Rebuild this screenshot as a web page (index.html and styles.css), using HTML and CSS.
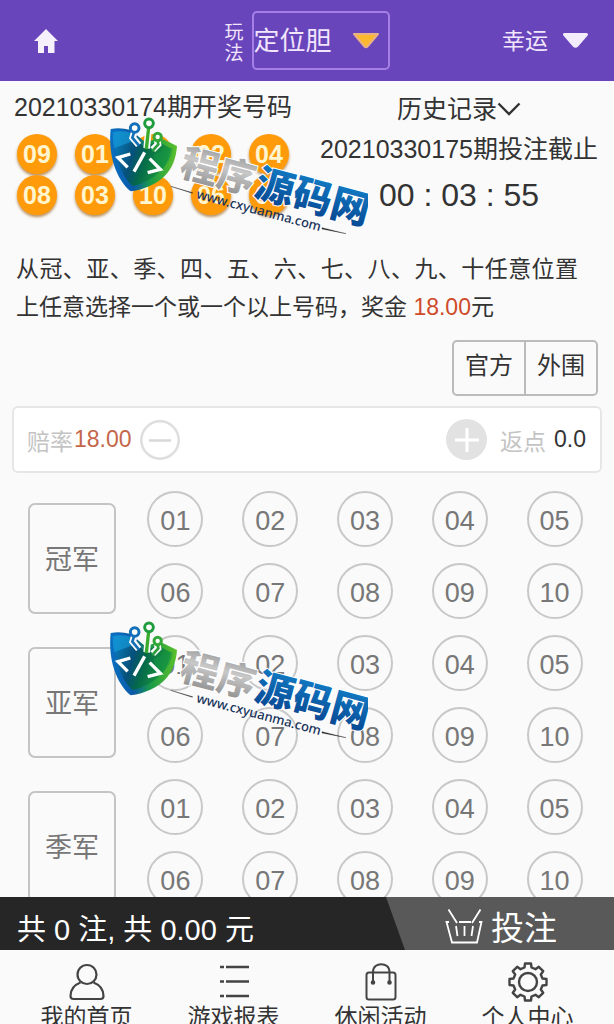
FILE: index.html
```html
<!DOCTYPE html>
<html lang="zh-CN">
<head>
<meta charset="utf-8">
<meta name="viewport" content="width=device-width, initial-scale=1">
<title>定位胆</title>
<link rel="stylesheet" href="styles.css">
</head>
<body>
<div class="app">
  <header class="topbar">
    <a class="home" href="#" aria-label="首页">
      <svg width="24" height="24" viewBox="0 0 24 24"><path fill="#f6effc" d="M12 0 24 12H20.500V24H14V17H10V24H4V12H0Z"/></svg>
    </a>
    <div class="play">
      <label class="play-label" for="play">玩法</label>
      <div class="picker picker-play">
        <select id="play"><option>定位胆</option></select>
        <svg class="caret" width="28" height="17" viewBox="0 0 28 17"><path d="M2 2H26L15.500 14.500Q14 16 12.500 14.500Z" fill="#fdb92e" stroke="#e9b184" stroke-width="2" stroke-linejoin="round"/></svg>
      </div>
    </div>
    <div class="picker picker-game">
      <select aria-label="彩种"><option>幸运</option></select>
      <svg class="caret" width="27" height="17" viewBox="0 0 27 17"><path d="M2.500 2.500H24.500L15 13.500Q13.500 15 12 13.500Z" fill="#f3ecfd" stroke="#f3ecfd" stroke-width="3" stroke-linejoin="round"/></svg>
    </div>
  </header>

  <main class="content">
    <section class="draw">
      <div class="result">
        <h2 class="issue">20210330174期开奖号码</h2>
        <div class="balls">
          <span>09</span><span>01</span><span>07</span><span>02</span><span>04</span>
          <span>08</span><span>03</span><span>10</span><span>06</span><span>05</span>
        </div>
      </div>
      <div class="deadline">
        <button class="history" type="button">历史记录<svg width="24" height="14" viewBox="0 0 24 14"><path d="M1.500 1.500 12 12 22.500 1.500" fill="none" stroke="#333" stroke-width="2.400"/></svg></button>
        <p class="issue">20210330175期投注截止</p>
        <p class="timer">00 : 03 : 55</p>
      </div>
    </section>

    <p class="rule">从冠、亚、季、四、五、六、七、八、九、十任意位置上任意选择一个或一个以上号码，奖金 <em>18.00</em>元</p>

    <div class="modes">
      <button type="button">官方</button>
      <button type="button">外围</button>
    </div>

    <section class="odds">
      <span class="odds-label">赔率</span><span class="odds-value">18.00</span>
      <button class="step minus" type="button" aria-label="减少"><svg width="40" height="40" viewBox="0 0 40 40"><circle cx="20" cy="20" r="18.700" fill="none" stroke="#dedede" stroke-width="2.500"/><path d="M9 20.500H31" stroke="#d8d8d8" stroke-width="2.500"/></svg></button>
      <button class="step plus" type="button" aria-label="增加"><svg width="41" height="41" viewBox="0 0 41 41"><circle cx="20.500" cy="20.500" r="20.500" fill="#e2e2e2"/><path d="M9 21H33M21 9V33" stroke="#fff" stroke-width="3"/></svg></button>
      <span class="odds-label">返点</span><span class="rebate">0.0</span>
    </section>

    <section class="board">
      <div class="group">
        <button class="rank" type="button">冠军</button>
        <div class="numbers">
          <button type="button">01</button><button type="button">02</button><button type="button">03</button><button type="button">04</button><button type="button">05</button>
          <button type="button">06</button><button type="button">07</button><button type="button">08</button><button type="button">09</button><button type="button">10</button>
        </div>
      </div>
      <div class="group">
        <button class="rank" type="button">亚军</button>
        <div class="numbers">
          <button type="button">01</button><button type="button">02</button><button type="button">03</button><button type="button">04</button><button type="button">05</button>
          <button type="button">06</button><button type="button">07</button><button type="button">08</button><button type="button">09</button><button type="button">10</button>
        </div>
      </div>
      <div class="group">
        <button class="rank" type="button">季军</button>
        <div class="numbers">
          <button type="button">01</button><button type="button">02</button><button type="button">03</button><button type="button">04</button><button type="button">05</button>
          <button type="button">06</button><button type="button">07</button><button type="button">08</button><button type="button">09</button><button type="button">10</button>
        </div>
      </div>
    </section>
  </main>

  <section class="betbar">
    <p class="total">共 0 注, 共 0.00 元</p>
    <button class="submit" type="button">
      <svg width="38" height="36" viewBox="0 0 38 36" fill="none" stroke="#fff" stroke-width="1.800"><path d="M4 14H1.500L7 34.500H32L36.500 14H34M14 14H26M3.500 1.500 12 15M35.500 1.500 27 15M11 18 12.500 28M19.500 18V28M28 18 26.500 28"/></svg>
      投注
    </button>
  </section>

  <nav class="tabs">
    <a href="#"><svg width="36" height="38" viewBox="0 0 36 38" fill="none" stroke="#444" stroke-width="2.200"><circle cx="18" cy="11.500" r="9.500"/><path d="M11.500 19.500C5 22 1.500 27 1.500 33Q1.500 36 4.500 36H31.500Q34.500 36 34.500 33C34.500 27 31 22 24.500 19.500"/></svg>我的首页</a>
    <a href="#"><svg width="36" height="38" viewBox="0 0 36 38" fill="none" stroke="#444" stroke-width="2.400"><path d="M4 4H8M10 4H33M4 18.500H8M10 18.500H33M4 33H8M10 33H33"/></svg>游戏报表</a>
    <a href="#"><svg width="36" height="38" viewBox="0 0 36 38" fill="none" stroke="#444" stroke-width="2"><rect x="3.500" y="9.500" width="29" height="27" rx="2.500"/><path d="M10 19V9C10 -1.500 26.500 -1.500 26.500 9V19"/><circle cx="10" cy="19.500" r="1.300" fill="#444"/><circle cx="26.500" cy="19.500" r="1.300" fill="#444"/></svg>休闲活动</a>
    <a href="#"><svg width="40" height="40" viewBox="0 0 40 40" fill="none" stroke="#444" stroke-width="2.400" stroke-linejoin="round"><path d="M16.500 5.500 17 1.500H23L23.500 5.500 27.500 7.200 30.800 4.800 35.200 9.200 32.800 12.500 34.500 16.500 38.500 17V23L34.500 23.500 32.800 27.500 35.200 30.800 30.800 35.200 27.500 32.800 23.500 34.500 23 38.500H17L16.500 34.500 12.500 32.800 9.200 35.200 4.800 30.800 7.200 27.500 5.500 23.500 1.500 23V17L5.500 16.500 7.200 12.500 4.800 9.200 9.200 4.800 12.500 7.200Z"/><circle cx="20" cy="20" r="9"/></svg>个人中心</a>
  </nav>

  <svg width="0" height="0" class="defs" aria-hidden="true">
    <defs>
      <linearGradient id="rim" x1="0" y1="0" x2="1" y2="0"><stop offset="0" stop-color="#0a6fc0"/><stop offset=".35" stop-color="#0a5aa8"/><stop offset=".6" stop-color="#1a9a48"/><stop offset="1" stop-color="#5cc02a"/></linearGradient>
      <linearGradient id="face" x1="0" y1="0" x2="1" y2=".3"><stop offset="0" stop-color="#0b80c0"/><stop offset=".4" stop-color="#06507a"/><stop offset=".6" stop-color="#04684c"/><stop offset="1" stop-color="#1c9a3a"/></linearGradient>
      <linearGradient id="silver" x1="0" y1="0" x2="0" y2="1"><stop offset="0" stop-color="#858585"/><stop offset=".45" stop-color="#c8c8c8"/><stop offset="1" stop-color="#858585"/></linearGradient>
      <linearGradient id="blue" x1="0" y1="0" x2="0" y2="1"><stop offset="0" stop-color="#1488d0"/><stop offset="1" stop-color="#06408c"/></linearGradient>
      <symbol id="brand" viewBox="54 30 780 375">
        <path d="M62 72Q90 66 122 75L166 112 210 98 261 123C256 196 212 246 122 259C78 222 54 150 62 72Z" fill="url(#rim)"/>
        <path d="M76 84Q100 80 122 86L160 124 206 110 242 130C236 186 196 226 128 244C90 208 72 150 76 84Z" fill="url(#face)"/>
        <path d="M68 80Q98 74 124 84L140 104 72 130Q67 104 68 80Z" fill="#16a0e0" opacity=".6"/>
        <path d="M190 150 248 128Q244 170 208 200Z" fill="#159447" opacity=".55"/>
        <g fill="none" stroke="#fafafa" stroke-width="20"><path d="M134 78 128 98 146 120M176 66 170 130M202 106 204 118 188 134"/></g>
        <g fill="none" stroke-width="8"><path d="M133 80 127 98 147 122" stroke="#126fb8"/><path d="M176 68 169 132" stroke="#3aab2c" stroke-width="10"/><path d="M203 108 205 118 187 138" stroke="#2ba03c"/></g>
        <g fill="#fff" stroke-width="9"><circle cx="134" cy="69" r="13" stroke="#126fb8"/><circle cx="177" cy="55" r="13" stroke="#1f9d3e"/><circle cx="203" cy="96" r="11" stroke="#34a838"/></g>
        <g fill="none" stroke="#fff" stroke-width="10"><path d="M121 147 84 158 113 187M179 161 211 193 173 203"/><path d="M164 142 132 200"/></g>
        <g class="brand-name" transform="translate(258 218) rotate(15)" stroke="#fff" stroke-width="6">
          <text x="4" y="-10" font-size="114" fill="url(#silver)">程序</text>
          <text x="236" y="-9" font-size="117" fill="url(#blue)">源码网</text>
        </g>
        <g transform="translate(317 279) rotate(15)"><text class="brand-url" x="0" y="0" font-size="39" fill="#17325a">www.cxyuanma.com</text></g>
        <path d="M242 244 308 263 307 265ZM696 368 768 386 696 372Z" fill="#222" stroke="#222"/>
      </symbol>
    </defs>
  </svg>
  <svg class="mark mark-upper" role="img" aria-label="程序源码网"><use href="#brand"/></svg>
  <svg class="mark mark-lower" role="img" aria-label="程序源码网"><use href="#brand"/></svg>
</div>
</body>
</html>
```

FILE: styles.css
```css
* {
  box-sizing: border-box;
}

body {
  margin: 0;
  background: #fafafa;
  color: #333;
  font-family: "Liberation Sans", "Noto Sans CJK SC", sans-serif;
}

h2,
p {
  margin: 0;
  font-weight: 400;
}

button,
select {
  margin: 0;
  padding: 0;
  border: 0;
  background: none;
  color: inherit;
  font: inherit;
}

a {
  color: inherit;
  text-decoration: none;
}

svg {
  display: block;
  flex: none;
}

.app {
  position: relative;
  display: flex;
  flex-direction: column;
  height: 100vh;
  overflow: hidden;
}

/* top bar */
.topbar {
  flex: none;
  display: grid;
  grid-template-columns: 1fr auto 1fr;
  align-items: center;
  height: 81px;
  padding: 0 25px;
  background: #6945bb;
  color: #f1e6fc;
}

.home {
  justify-self: start;
  margin-left: 9px;
}

.play {
  display: flex;
  align-items: center;
  gap: 7px;
}

.play-label {
  width: 20px;
  font-size: 19px;
  line-height: 21px;
  padding-top: 4px;
}

.picker {
  display: grid;
  align-items: center;
}

.picker select,
.picker .caret {
  grid-area: 1 / 1;
}

.picker select {
  appearance: none;
  outline: 0;
}

.caret {
  justify-self: end;
  pointer-events: none;
}

.picker-play select {
  width: 138px;
  height: 59px;
  border: 2px solid #a57ee6;
  border-radius: 5px;
  font-size: 26px;
}

.picker-play .caret {
  margin-right: 10px;
}

.picker-game {
  justify-self: end;
}

.picker-game select {
  width: 87px;
  height: 40px;
  font-size: 23px;
}

/* page body */
.content {
  flex: 1;
  min-height: 0;
  overflow: hidden;
}

.draw {
  display: flex;
  justify-content: space-between;
  padding: 8px 16px 0 14px;
}

.issue {
  font-size: 25px;
  line-height: 40px;
  white-space: nowrap;
}

.result .issue {
  line-height: 36px;
}

.balls {
  display: grid;
  grid-template-columns: repeat(5, 40px);
  gap: 1px 18px;
  padding: 9px 3px 0;
}

.balls span {
  height: 40px;
  border-radius: 50%;
  background: #ff9b0a;
  box-shadow: 0 2px 3px #b98f5a;
  color: #fff6d0;
  font-size: 25px;
  font-weight: 700;
  line-height: 41px;
  text-align: center;
}

.deadline {
  display: flex;
  flex-direction: column;
  align-items: center;
}

.history {
  display: flex;
  align-items: center;
  font-size: 25px;
  line-height: 40px;
}

.timer {
  font-size: 32px;
  line-height: 52px;
}

.rule {
  padding: 29px 36px 0 16px;
  font-size: 23px;
  line-height: 38px;
  text-align: justify;
}

.rule em {
  color: #cf4a2a;
  font-style: normal;
}

.modes {
  display: flex;
  width: 146px;
  margin: 14px 16px 0 auto;
  border: 2px solid #bbb;
  border-radius: 5px;
}

.modes button {
  flex: 1;
  height: 52px;
  padding-bottom: 10px;
  font-size: 24px;
}

.modes button + button {
  border-left: 2px solid #bbb;
}

.odds {
  display: flex;
  align-items: center;
  height: 67px;
  margin: 10px 12px 0;
  padding: 0 14px 0 13px;
  border: 2px solid #e6e6e6;
  border-radius: 6px;
  background: #fff;
  font-size: 23px;
}

.odds-label {
  color: #c4c4c4;
}

.odds-value {
  margin-left: 1px;
  color: #c4664a;
}

.minus {
  margin-left: 8px;
}

.plus {
  margin: 0 13px 0 auto;
}

.rebate {
  margin-left: 8px;
}

.board {
  padding: 10px 12px 0 28px;
}

.group {
  display: flex;
  align-items: flex-start;
  gap: 12px;
}

.rank {
  width: 88px;
  height: 111px;
  margin-top: 20px;
  padding-bottom: 2px;
  border: 2px solid #c4c4c4;
  border-radius: 7px;
  color: #777;
  font-size: 27px;
}

.numbers {
  flex: 1;
  display: grid;
  grid-template-columns: repeat(5, 1fr);
  grid-auto-rows: 72px;
  place-items: center;
}

.numbers button {
  width: 56px;
  height: 56px;
  padding-top: 4px;
  border: 2px solid #c8c8c8;
  border-radius: 50%;
  color: #777;
  font-size: 27px;
}

/* bet summary */
.betbar {
  flex: none;
  display: flex;
  justify-content: space-between;
  height: 53px;
  background: #262626;
  color: #fff;
}

.total {
  padding: 6px 0 0 17px;
  font-size: 29px;
  line-height: 54px;
}

.submit {
  display: flex;
  align-items: center;
  justify-content: center;
  gap: 8px;
  width: 228px;
  padding: 4px 0 0 2px;
  background: #595959;
  clip-path: polygon(0 0, 100% 0, 100% 100%, 19px 100%);
  font-size: 33px;
}

/* bottom navigation */
.tabs {
  flex: none;
  display: grid;
  grid-template-columns: repeat(4, 1fr);
  height: 74px;
  padding: 12px 13px 0;
  overflow: hidden;
}

.tabs a {
  display: grid;
  grid-template-rows: 40px 30px;
  place-items: center;
  font-size: 23px;
  line-height: 30px;
}

/* brand marks lying over the page */
.defs {
  position: absolute;
}

.mark {
  position: absolute;
  left: 108px;
  width: 260px;
  height: 125px;
  pointer-events: none;
}

.mark-upper {
  top: 115px;
}

.mark-lower {
  top: 619px;
}

.brand-name {
  font-family: "Noto Sans CJK SC", sans-serif;
  font-weight: 900;
  paint-order: stroke;
}

.brand-url {
  font-family: "Noto Sans", sans-serif;
  font-weight: 500;
}
```
